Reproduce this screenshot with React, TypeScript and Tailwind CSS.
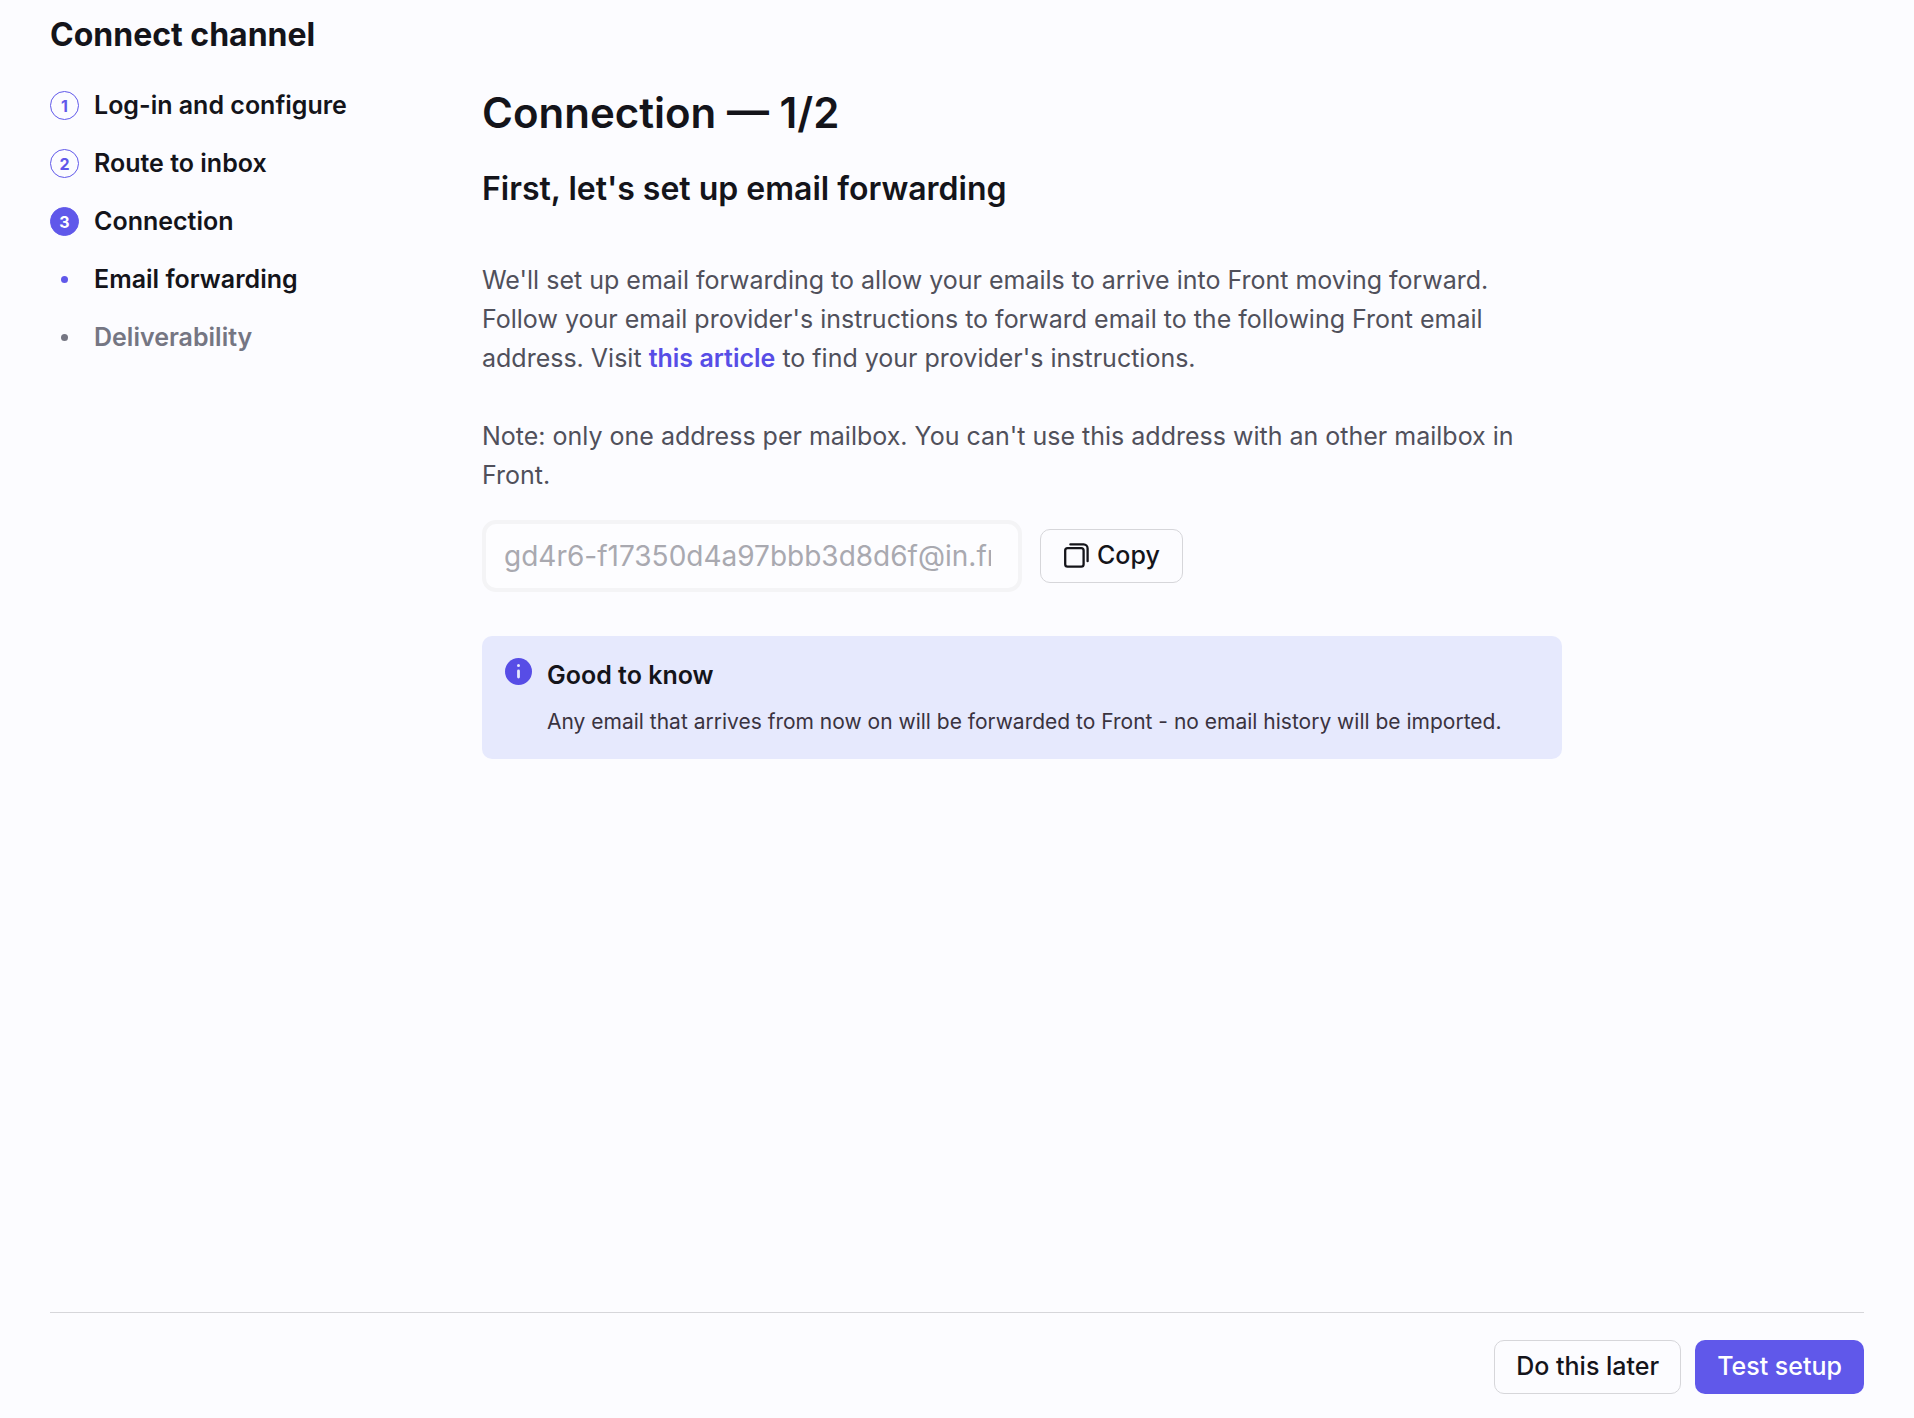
import React from 'react';

type Step = {
  label: string;
  marker?: number;
  state: 'done' | 'current' | 'upcoming';
};

const steps: Step[] = [
  { label: 'Log-in and configure', marker: 1, state: 'done' },
  { label: 'Route to inbox', marker: 2, state: 'done' },
  { label: 'Connection', marker: 3, state: 'current' },
  { label: 'Email forwarding', state: 'current' },
  { label: 'Deliverability', state: 'upcoming' },
];

const StepMarker: React.FC<{ step: Step }> = ({ step }) => {
  if (step.marker === undefined) {
    return (
      <span className="flex w-[29px] justify-center">
        <span className={`size-[7px] rounded-full ${step.state === 'upcoming' ? 'bg-[#757683]' : 'bg-[#6058ea]'}`} />
      </span>
    );
  }

  return (
    <span
      className={`flex size-[29px] items-center justify-center rounded-full border border-[#6058ea] text-base font-bold ${
        step.state === 'current' ? 'bg-[#6058ea] text-white' : 'text-[#6058ea]'
      }`}
    >
      {step.marker}
    </span>
  );
};

const StepList: React.FC = () => (
  <nav aria-label="Setup steps">
    <ol className="flex flex-col gap-[19px]">
      {steps.map((step) => (
        <li
          key={step.label}
          className={`flex h-[39px] items-center gap-[15px] text-[25px] font-semibold ${
            step.state === 'upcoming' ? 'text-[#757683]' : 'text-[#14141a]'
          }`}
        >
          <StepMarker step={step} />
          {step.label}
        </li>
      ))}
    </ol>
  </nav>
);

const CopyIcon: React.FC = () => (
  <svg className="size-[26px]" viewBox="0 0 26 26" fill="none" stroke="currentColor" strokeWidth="2.3" aria-hidden="true">
    <rect x="2.2" y="5.2" width="18.4" height="18.4" rx="2.4" />
    <path d="M7.4 1.4H20.6a4 4 0 0 1 4 4V18.2" strokeLinecap="round" />
  </svg>
);

const InfoIcon: React.FC = () => (
  <svg className="size-[27px] shrink-0" viewBox="0 0 27 27" aria-hidden="true">
    <circle cx="13.5" cy="13.5" r="13.5" fill="#574de6" />
    <circle cx="13.5" cy="7.5" r="1.5" fill="#e6e9fd" />
    <rect x="12.1" y="11.6" width="2.8" height="8.8" rx="1.4" fill="#e6e9fd" />
  </svg>
);

export default function App() {
  return (
    <div className="flex min-h-screen flex-col bg-[#fcfcff] px-[50px] pb-6 font-[Inter,sans-serif] text-[#14141a]">
      <h1 className="pt-[15px] text-[32px] leading-10 font-bold">Connect channel</h1>

      <div className="mt-[31px] flex flex-1">
        <aside className="w-[432px] shrink-0">
          <StepList />
        </aside>

        <main className="max-w-[1080px] flex-1">
          <h2 className="text-[42px] leading-[54px] font-semibold">Connection — 1/2</h2>
          <h3 className="mt-[29px] text-[32px] leading-10 font-semibold">First, let's set up email forwarding</h3>

          <div className="mt-[52px] flex flex-col gap-[39px] text-[25px] leading-[39px] text-[#50505b]">
            <p>
              We'll set up email forwarding to allow your emails to arrive into Front moving forward. Follow your email
              provider's instructions to forward email to the following Front email address. Visit{' '}
              <a href="#article" className="font-semibold text-[#574de6]">
                this article
              </a>{' '}
              to find your provider's instructions.
            </p>
            <p>Note: only one address per mailbox. You can't use this address with an other mailbox in Front.</p>
          </div>

          <div className="mt-[25px] flex items-center gap-[18px]">
            <input
              type="text"
              readOnly
              aria-label="Forwarding address"
              defaultValue="gd4r6-f17350d4a97bbb3d8d6f@in.frontapp.com"
              className="h-[72px] w-1/2 rounded-[14px] border-4 border-[#f4f4f6] bg-[#fdfdff] pr-[27px] pl-[18px] text-[28px] text-[#a9a9b0] outline-none"
            />
            <button
              type="button"
              className="flex h-[54px] items-center gap-2 rounded-[10px] border border-[#d6d6da] px-[22px] text-[25px] font-medium"
            >
              <CopyIcon />
              Copy
            </button>
          </div>

          <section className="mt-11 flex gap-[15px] rounded-[10px] bg-[#e6e9fd] pt-[22px] pr-3 pb-[21px] pl-[23px]">
            <InfoIcon />
            <div>
              <h4 className="text-[25px] leading-[34px] font-semibold">Good to know</h4>
              <p className="mt-3.5 text-[21px] leading-8 text-[#3a3340]">
                Any email that arrives from now on will be forwarded to Front - no email history will be imported.
              </p>
            </div>
          </section>
        </main>
      </div>

      <footer className="flex justify-end gap-3.5 border-t border-[#d6d6da] pt-[27px]">
        <button type="button" className="h-[54px] rounded-[10px] border border-[#d6d6da] px-[21px] text-[25px] font-medium">
          Do this later
        </button>
        <button type="button" className="h-[54px] rounded-[10px] bg-[#6058ea] px-[22px] text-[25px] font-medium text-white">
          Test setup
        </button>
      </footer>
    </div>
  );
}
